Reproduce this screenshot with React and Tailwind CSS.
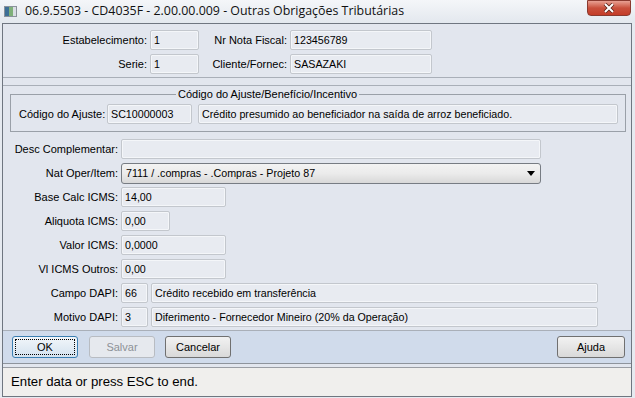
import React from "react";

const inputCls =
  "h-[20px] border border-[#c3c7cd] rounded-[2px] bg-[#e8ebf1] shadow-[inset_0_0_0_1px_#f4f6f9] px-[3px] flex items-center text-[10.7px] text-black whitespace-nowrap overflow-hidden";

function Field({ w, children }) {
  return (
    <div className={inputCls} style={{ width: w }}>
      {children}
    </div>
  );
}

function Row({ label, children, top }) {
  return (
    <div className="flex items-center" style={{ marginTop: top }}>
      <div className="w-[118px] text-right pr-[3px] text-[11px]">{label}</div>
      <div className="flex gap-[3px]">{children}</div>
    </div>
  );
}

function Btn({ children, disabled, focused, w = 66 }) {
  return (
    <div
      className={
        "h-[22px] rounded-[3px] border flex items-center justify-center text-[11px] " +
        (disabled
          ? "border-[#b8bcc2] bg-[#e6e9ee] text-[#8d9197]"
          : focused
          ? "border-[#3c7fb1] bg-gradient-to-b from-[#f2f6fa] to-[#d4e2ef] text-black"
          : "border-[#707070] bg-gradient-to-b from-[#f2f2f2] to-[#d9d9d9] text-black")
      }
      style={{ width: w }}
    >
      {focused ? (
        <div className="w-[60px] h-[16px] border border-dotted border-black flex items-center justify-center">
          {children}
        </div>
      ) : (
        children
      )}
    </div>
  );
}

export default function App() {
  return (
    <div
      className="w-[635px] h-[398px] bg-[#e6eaf0] overflow-hidden flex flex-col text-black"
      style={{ fontFamily: '"Liberation Sans", Arial, sans-serif' }}
    >
      {/* title bar */}
      <div className="h-[23px] flex items-center relative bg-gradient-to-b from-[#f4f6f9] to-[#e3e8ee]">
        <svg width="13" height="11" viewBox="0 0 13 11" className="ml-[4px] mt-[-1px]">
          <rect x="0" y="0" width="13" height="11" fill="#8a929b" />
          <rect x="1" y="1" width="4" height="9" fill="#3d6f96" />
          <rect x="5" y="1" width="4" height="9" fill="#7fb07a" />
          <rect x="9" y="1" width="3" height="9" fill="#d9dee4" />
        </svg>
        <span className="ml-[8px] text-[12.4px] text-[#111]" style={{ fontFamily: '"Open Sans", sans-serif' }}>
          06.9.5503 - CD4035F - 2.00.00.009 - Outras Obrigações Tributárias
        </span>
        <div className="absolute right-[4px] top-0 w-[44px] h-[16px] rounded-b-[4px] border border-[#8a3a2f] bg-gradient-to-b from-[#e8a093] via-[#c9503c] to-[#c43c28] flex items-center justify-center">
          <svg width="12" height="10" viewBox="0 0 12 10">
            <path d="M2 1 L10 9 M10 1 L2 9" stroke="#5a2218" strokeWidth="3.6" />
            <path d="M2 1 L10 9 M10 1 L2 9" stroke="#ffffff" strokeWidth="2" />
          </svg>
        </div>
      </div>

      {/* window body */}
      <div className="ml-[2px] mr-[3px] h-[374px] border border-[#6f7680] bg-[#e2e6ee] flex flex-col">
        {/* header panel */}
        <div className="h-[54px] border-b border-[#a9afb8] pt-[6px]">
          <div className="flex items-center">
            <div className="w-[147px] text-right pr-[3px] text-[11px]">Estabelecimento:</div>
            <Field w={49}>1</Field>
            <div className="w-[91px] text-right pr-[3px] text-[11px]">Nr Nota Fiscal:</div>
            <Field w={142}>123456789</Field>
          </div>
          <div className="flex items-center mt-[4px]">
            <div className="w-[147px] text-right pr-[3px] text-[11px]">Serie:</div>
            <Field w={49}>1</Field>
            <div className="w-[91px] text-right pr-[3px] text-[11px]">Cliente/Fornec:</div>
            <Field w={142}>SASAZAKI</Field>
          </div>
        </div>
        <div className="h-[8px] border-b border-[#a9afb8]" />

        {/* main panel */}
        <div className="flex-1 px-[7px] pt-[8px]">
          <div className="relative border border-[#9aa0a8] h-[38px] w-[616px] flex items-center pl-[8px]">
            <div className="absolute top-[-9px] left-[165px] px-[2px] bg-[#e2e6ee] text-[11px]">
              Código do Ajuste/Benefício/Incentivo
            </div>
            <div className="w-[88px] shrink-0 whitespace-nowrap text-[11px] mt-[2px]">Código do Ajuste:</div>
            <div className="flex gap-[6px] mt-[2px]">
              <Field w={85}>SC10000003</Field>
              <Field w={420}>Crédito presumido ao beneficiador na saída de arroz beneficiado.</Field>
            </div>
          </div>

          <div className="-ml-[7px]">
            <Row label="Desc Complementar:" top={7}>
              <Field w={420}></Field>
            </Row>
            <Row label="Nat Oper/Item:" top={4}>
              <div className="w-[420px] h-[21px] rounded-[3px] border border-[#777c83] bg-gradient-to-b from-[#f3f3f3] via-[#ebebeb] to-[#d8d8d8] flex items-center px-[4px] text-[10.7px]">
                <span className="flex-1">7111 / .compras - .Compras - Projeto 87</span>
                <svg width="8" height="5" viewBox="0 0 8 5" className="mr-[1px]">
                  <path d="M0 0 L8 0 L4 5 Z" fill="#000" />
                </svg>
              </div>
            </Row>
            <Row label="Base Calc ICMS:" top={3}>
              <Field w={105}>14,00</Field>
            </Row>
            <Row label="Aliquota ICMS:" top={4}>
              <Field w={49}>0,00</Field>
            </Row>
            <Row label="Valor ICMS:" top={4}>
              <Field w={105}>0,0000</Field>
            </Row>
            <Row label="Vl ICMS Outros:" top={4}>
              <Field w={105}>0,00</Field>
            </Row>
            <Row label="Campo DAPI:" top={4}>
              <Field w={27}>66</Field>
              <Field w={447}>Crédito recebido em transferência</Field>
            </Row>
            <Row label="Motivo DAPI:" top={4}>
              <Field w={27}>3</Field>
              <Field w={447}>Diferimento - Fornecedor Mineiro (20% da Operação)</Field>
            </Row>
          </div>
        </div>

        {/* button bar */}
        <div className="h-[34px] bg-[#d0dbeb] border-t border-[#a9afb8] border-b border-b-[#8e949c] flex items-center pl-[9px] pr-[6px]">
          <Btn focused>OK</Btn>
          <div className="w-[11px]" />
          <Btn disabled>Salvar</Btn>
          <div className="w-[10px]" />
          <Btn>Cancelar</Btn>
          <div className="flex-1" />
          <Btn w={68}>Ajuda</Btn>
        </div>

        {/* status bar */}
        <div className="h-[3px] bg-[#e2e6ee]" />
        <div className="h-[29px] bg-[#f0efed] border-t border-[#9a9ea4] flex items-center px-[8px] text-[13.2px]">
          Enter data or press ESC to end.
        </div>
      </div>
    </div>
  );
}
